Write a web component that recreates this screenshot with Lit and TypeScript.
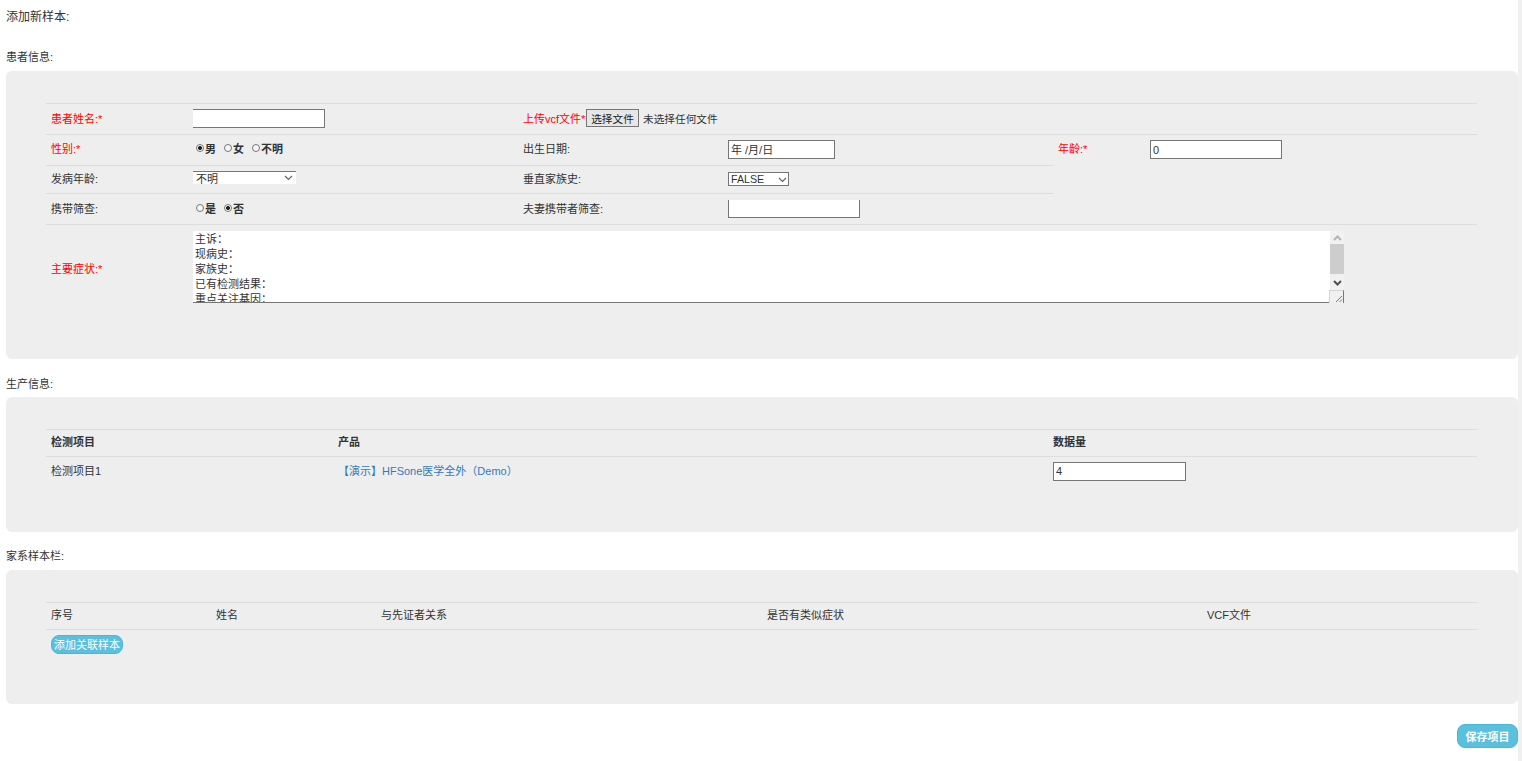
import { LitElement, html, css } from "lit";
import { customElement } from "lit/decorators.js";

@customElement("app-root")
export class AppRoot extends LitElement {
  static styles = css`
    :host { display: block; height: 761px; overflow: hidden; font-family: "Liberation Sans", "Noto Sans CJK SC", sans-serif; font-size: 11px; color: #333; background: #fff; }
    * { box-sizing: border-box; }
    .page { display: flex; height: 761px; }
    .main { width: 1518px; padding-left: 6px; flex: none; }
    .strip { flex: 1; background: #f0f0f0; }
    .title { font-size: 12px; line-height: 14px; padding-top: 10px; margin-bottom: 26px; }
    .sec { line-height: 14px; height: 14px; margin-bottom: 7px; }
    .sec.s2 { margin-top: 18px; margin-bottom: 6px; }
    .panel { background: #eee; border-radius: 6px; padding: 32px 41px 0 40px; margin-bottom: 17px; }
    .p1 { height: 288px; margin-bottom: 0; }
    .p2 { height: 135px; }
    .p3 { height: 134px; margin-bottom: 20px; }
    table { width: 1431px; table-layout: fixed; border-collapse: separate; border-spacing: 0; }
    td, th { border-top: 1px solid #ddd; padding: 0 5px 4px; vertical-align: middle; text-align: left; font-weight: 400; }
    th { font-weight: 700; }
    td.pb2 { padding-bottom: 2px; }
    td.pb0 { padding-bottom: 0; }
    td.top { vertical-align: top; padding-top: 5px; padding-bottom: 0; }
    td.top6 { vertical-align: top; padding-top: 6px; padding-bottom: 0; }
    .req { color: #f00; }
    .h31 { height: 31px; }
    .h28 { height: 28px; }
    .h27 { height: 27px; }
    .h88 { height: 88px; }
    .c142 { width: 142px; } .c330 { width: 330px; } .c205 { width: 205px; } .c92 { width: 92px; } .c332 { width: 332px; }
    .c287 { width: 287px; } .c715 { width: 715px; } .c429 { width: 429px; }
    .c165 { width: 165px; } .c386 { width: 386px; } .c440 { width: 440px; } .c275 { width: 275px; }
    input[type="text"] { display: block; height: 19px; background: #fff; border: 1px solid #767676; border-radius: 0; padding: 0 2px; font: inherit; color: #333; outline: none; }
    .w132 { width: 132px; }
    .w107 { width: 107px; }
    .w133 { width: 133px; }
    input.noleft { border-left: none; }
    input.notop { border-top: none; height: 18px; }
    .radios { display: flex; align-items: center; padding-left: 3px; }
    .radios label { display: flex; align-items: center; font-weight: 700; margin-right: 8px; }
    .radios input { appearance: none; -webkit-appearance: none; width: 8px; height: 8px; margin: 0 1px 0 0; border: 1px solid #777; border-radius: 50%; background: #f6f6f6; }
    .radios input:checked { background: radial-gradient(circle, #222 0 1.8px, #f6f6f6 2.2px); }
    .file { display: flex; align-items: center; }
    .file .lab { width: 63px; flex: none; }
    .file button { width: 53px; height: 18px; padding: 0; font: inherit; font-size: 10.67px; color: #222; background: #e6e6e6; border: 1px solid #767676; border-radius: 0; }
    .file .none { margin-left: 4px; font-size: 10.67px; }
    .selbox { position: relative; display: block; }
    .selbox svg { position: absolute; width: 9px; height: 6px; pointer-events: none; }
    select { appearance: none; -webkit-appearance: none; display: block; font-family: inherit; color: #333; background: #fff; border-radius: 0; outline: none; }
    .sb1 { width: 103px; height: 13px; }
    .sb1 svg { left: 91px; top: 4px; }
    .sb2 { width: 61px; height: 14px; }
    .sb2 svg { left: 50px; top: 5px; }
    .sel1 { width: 103px; height: 13px; border: none; border-top: 1px solid #767676; padding: 1px 0 0 3px; font-size: 11px; line-height: 13px; overflow: hidden; }
    .sel2 { width: 61px; height: 14px; border: 1px solid #767676; padding: 0 0 0 2px; font-size: 10.67px; line-height: 12px; }
    .ta { display: flex; width: 1151px; height: 72px; }
    textarea { display: block; flex: none; width: 1137px; height: 72px; margin: 0; padding: 1px 2px 0; border: none; border-bottom: 1px solid #767676; background: #fff; font: inherit; line-height: 15px; color: #333; overflow: hidden; resize: none; outline: none; border-radius: 0; }
    .sbar { display: flex; flex-direction: column; width: 14px; height: 72px; }
    .arrow { display: flex; align-items: center; justify-content: center; background: #f1f1f1; }
    .arrow svg { width: 9px; height: 6px; display: block; }
    .up { height: 13px; }
    .thumb { height: 30px; background: #cdcdcd; }
    .down { height: 16px; padding-top: 2px; }
    .resizer { height: 13px; width: 15px; margin-left: -1px; background: #f0f0f0; border-top: 1px solid #d4d4d4; border-left: 1px solid #d4d4d4; border-right: 1px solid #767676; display: flex; align-items: flex-end; justify-content: flex-end; }
    .resizer svg { width: 8px; height: 8px; display: block; }
    a { color: #337ab7; text-decoration: none; }
    .btn { display: block; border: 1px solid #46b8da; background: #5bc0de; color: #fff; font: inherit; cursor: pointer; }
    .add { width: 72px; height: 19px; border-radius: 8px; padding: 0 0 2px; font-size: 11px; margin-top: 5px; }
    .foot { display: flex; justify-content: flex-end; }
    .save { width: 61px; height: 24px; border-radius: 8px; padding: 0 0 1px; font-weight: 700; font-size: 11px; }
  `;

  render() {
    const symptoms = "主诉：\n现病史：\n家族史：\n已有检测结果：\n重点关注基因：\n备注：";
    const chevron = html`<svg viewBox="0 0 9 6"><path d="M1 1l3.5 3.5L8 1" fill="none" stroke="#666" stroke-width="1.2" /></svg>`;
    return html`
      <div class="page">
        <div class="main">
          <div class="title">添加新样本:</div>
          <div class="sec">患者信息:</div>
          <div class="panel p1">
            <table>
              <colgroup>
                <col class="c142" /><col class="c330" /><col class="c205" /><col class="c330" /><col class="c92" /><col class="c332" />
              </colgroup>
              <tr>
                <td class="h31 req pb2">患者姓名:*</td>
                <td class="pb2"><input type="text" class="w132 noleft" /></td>
                <td colspan="4" class="pb2">
                  <div class="file">
                    <span class="lab req">上传vcf文件*</span>
                    <button>选择文件</button>
                    <span class="none">未选择任何文件</span>
                  </div>
                </td>
              </tr>
              <tr>
                <td class="h31 req">性别:*</td>
                <td>
                  <div class="radios">
                    <label><input type="radio" name="sex" checked /><span>男</span></label>
                    <label><input type="radio" name="sex" /><span>女</span></label>
                    <label><input type="radio" name="sex" /><span>不明</span></label>
                  </div>
                </td>
                <td>出生日期:</td>
                <td class="pb2"><input type="text" class="w107" value="年 /月/日" /></td>
                <td class="req top" rowspan="3">年龄:*</td>
                <td class="top" rowspan="3"><input type="text" class="w132" value="0" /></td>
              </tr>
              <tr>
                <td class="h28">发病年龄:</td>
                <td>
                  <div class="selbox sb1"><select class="sel1"><option>不明</option></select>${chevron}</div>
                </td>
                <td>垂直家族史:</td>
                <td class="pb2">
                  <div class="selbox sb2"><select class="sel2"><option>FALSE</option></select>${chevron}</div>
                </td>
              </tr>
              <tr>
                <td class="h31 pb2">携带筛查:</td>
                <td class="pb2">
                  <div class="radios">
                    <label><input type="radio" name="carrier" /><span>是</span></label>
                    <label><input type="radio" name="carrier" checked /><span>否</span></label>
                  </div>
                </td>
                <td class="pb2">夫妻携带者筛查:</td>
                <td class="pb0"><input type="text" class="w132 notop" /></td>
              </tr>
              <tr>
                <td class="h88 req pb2">主要症状:*</td>
                <td colspan="5" class="top6">
                  <div class="ta">
                    <textarea .value=${symptoms}></textarea>
                    <div class="sbar">
                      <div class="arrow up"><svg viewBox="0 0 9 6"><path d="M1 5l3.5-3.5L8 5" fill="none" stroke="#b4b4b4" stroke-width="2" /></svg></div>
                      <div class="thumb"></div>
                      <div class="arrow down"><svg viewBox="0 0 9 6"><path d="M1 1l3.5 3.5L8 1" fill="none" stroke="#505050" stroke-width="2" /></svg></div>
                      <div class="resizer"><svg viewBox="0 0 8 8"><path d="M1 7l6-6M4.5 7L7 4.5" fill="none" stroke="#777" stroke-width="1" /></svg></div>
                    </div>
                  </div>
                </td>
              </tr>
            </table>
          </div>

          <div class="sec s2">生产信息:</div>
          <div class="panel p2">
            <table>
              <colgroup><col class="c287" /><col class="c715" /><col class="c429" /></colgroup>
              <tr><th class="h27">检测项目</th><th>产品</th><th>数据量</th></tr>
              <tr>
                <td class="h31">检测项目1</td>
                <td><a href="#">【演示】HFSone医学全外（Demo）</a></td>
                <td class="pb2"><input type="text" class="w133" value="4" /></td>
              </tr>
            </table>
          </div>

          <div class="sec">家系样本栏:</div>
          <div class="panel p3">
            <table>
              <colgroup><col class="c165" /><col class="c165" /><col class="c386" /><col class="c440" /><col class="c275" /></colgroup>
              <tr>
                <td class="h27">序号</td><td>姓名</td><td>与先证者关系</td><td>是否有类似症状</td><td>VCF文件</td>
              </tr>
              <tr>
                <td colspan="5"><button class="btn add">添加关联样本</button></td>
              </tr>
            </table>
          </div>

          <div class="foot"><button class="btn save">保存项目</button></div>
        </div>
        <div class="strip"></div>
      </div>
    `;
  }
}
